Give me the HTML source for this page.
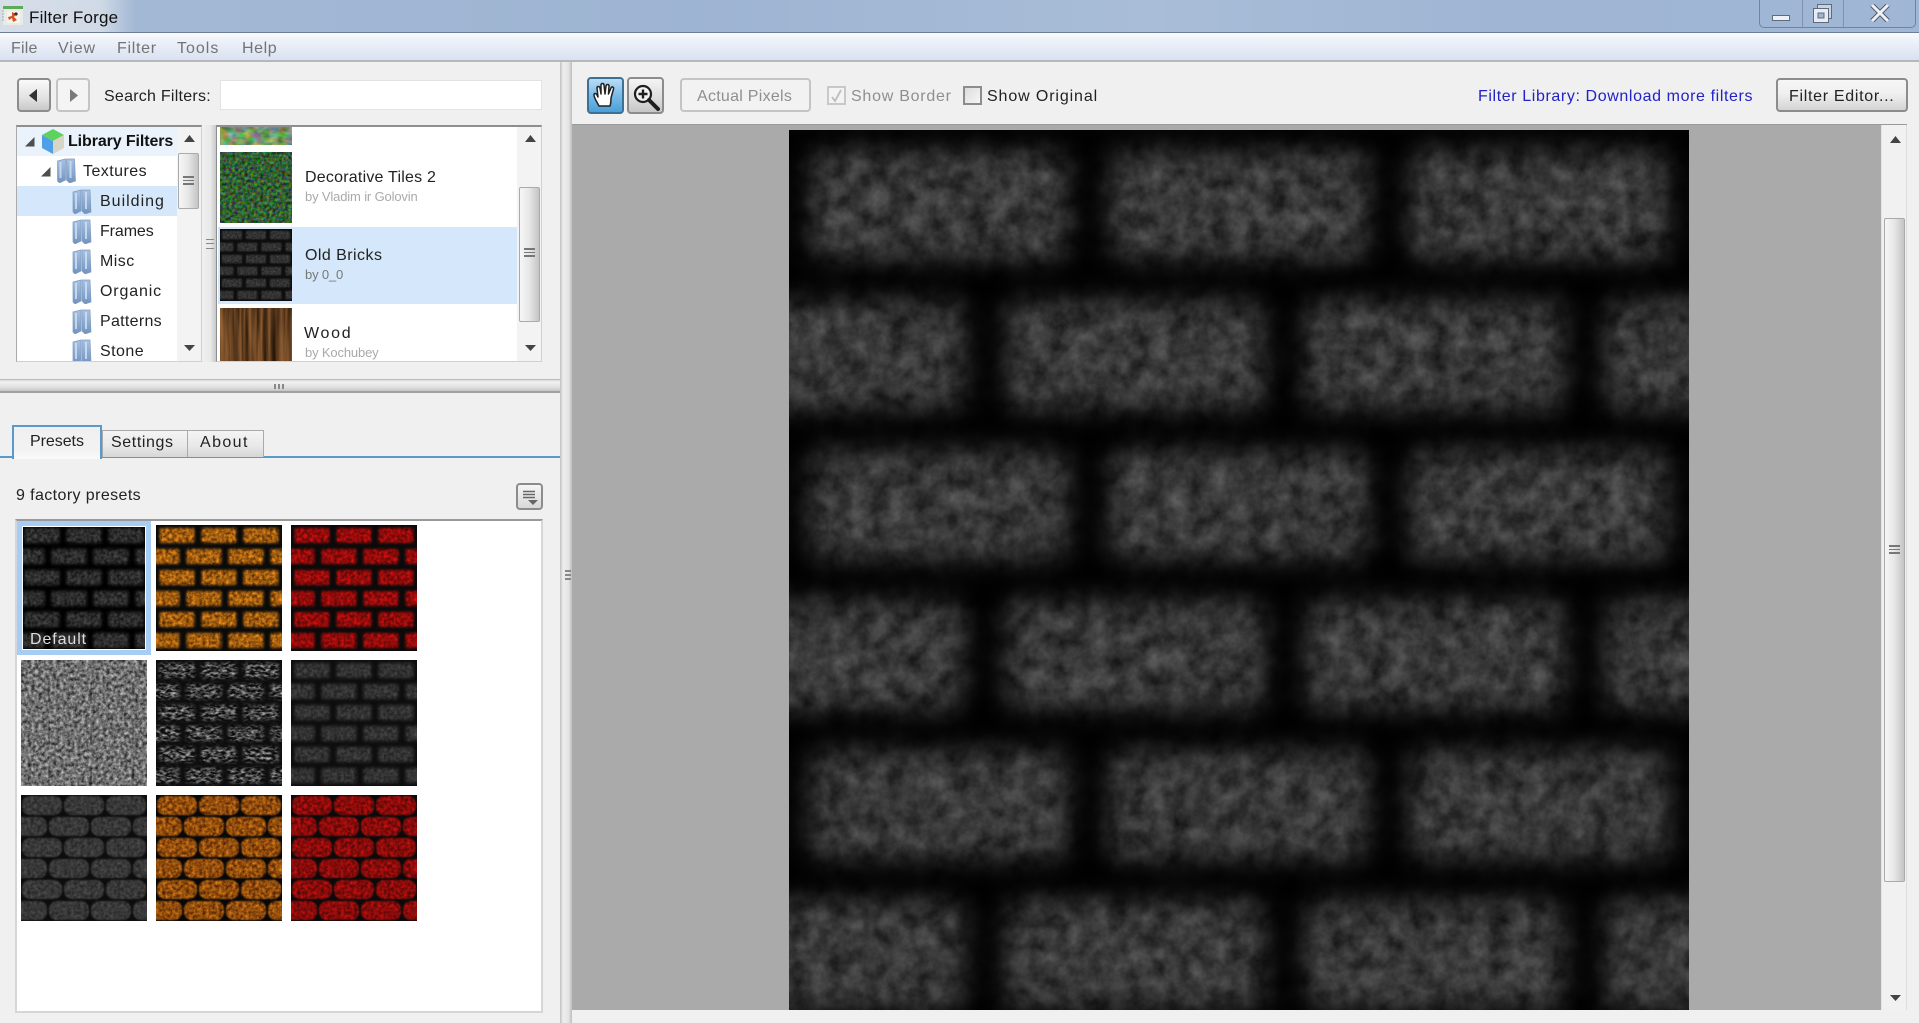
<!DOCTYPE html>
<html lang="en"><head><meta charset="utf-8"><title>Filter Forge</title>
<style>
html,body{margin:0;padding:0;width:1919px;height:1023px;overflow:hidden;background:#f0f0f0}
body{position:relative;font-family:"Liberation Sans",sans-serif;color:#222}
.a{position:absolute;box-sizing:border-box}
.t{position:absolute;white-space:nowrap;font-size:16px;line-height:18px;height:18px;margin-top:1px;letter-spacing:.45px;filter:blur(.25px)}
.s{font-size:13px;color:#aaa;letter-spacing:-.15px}
.thumb{background:linear-gradient(90deg,#f7f7f7,#e6e6e6 50%,#c4c4c4);border:1px solid #aaa;border-radius:2px}
.btn{border:2px solid #8c8c8c;border-radius:4px;background:linear-gradient(#f6f6f6,#f0f0f0 45%,#d4d4d4)}
svg{position:absolute;display:block}
</style></head><body>
<svg width="0" height="0" style="left:0;top:0">
<defs>
<pattern id="pm" width="900" height="300" patternUnits="userSpaceOnUse">
<rect width="900" height="300" fill="#000"/>
<g fill="#fff">
<rect x="20" y="20" width="260" height="110" rx="14"/><rect x="320" y="20" width="260" height="110" rx="14"/><rect x="620" y="20" width="260" height="110" rx="14"/>
<rect x="-84" y="170" width="260" height="110" rx="14"/><rect x="216" y="170" width="260" height="110" rx="14"/><rect x="516" y="170" width="260" height="110" rx="14"/><rect x="816" y="170" width="260" height="110" rx="14"/>
</g></pattern>
<pattern id="ps" width="126" height="42" patternUnits="userSpaceOnUse">
<rect width="126" height="42" fill="#000"/>
<g fill="#fff">
<rect x="3.500" y="3" width="35" height="15" rx="2"/><rect x="45.500" y="3" width="35" height="15" rx="2"/><rect x="87.500" y="3" width="35" height="15" rx="2"/>
<rect x="-11.500" y="24" width="35" height="15" rx="2"/><rect x="30.500" y="24" width="35" height="15" rx="2"/><rect x="72.500" y="24" width="35" height="15" rx="2"/><rect x="114.500" y="24" width="35" height="15" rx="2"/>
</g></pattern>
<pattern id="pr" width="126" height="42" patternUnits="userSpaceOnUse">
<rect width="126" height="42" fill="#000"/>
<g fill="#fff">
<rect x="1" y="1" width="40" height="19" rx="8"/><rect x="43" y="1" width="40" height="19" rx="8"/><rect x="85" y="1" width="40" height="19" rx="8"/>
<rect x="-14" y="22" width="40" height="19" rx="8"/><rect x="28" y="22" width="40" height="19" rx="8"/><rect x="70" y="22" width="40" height="19" rx="8"/><rect x="112" y="22" width="40" height="19" rx="8"/>
</g></pattern>
<pattern id="pl" width="126" height="126" patternUnits="userSpaceOnUse">
<rect width="126" height="126" fill="#fff"/>
<g stroke="#777" stroke-width="1" fill="none"><path d="M28 21V42M70 21V42M112 21V42M28 63V84M70 63V84M112 63V84M28 105V126M70 105V126M112 105V126"/></g>
</pattern>
<filter id="fm" x="0" y="0" width="1" height="1" color-interpolation-filters="sRGB">
<feGaussianBlur in="SourceGraphic" stdDeviation="13" result="m"/>
<feTurbulence type="fractalNoise" baseFrequency=".05" numOctaves="6" seed="4"/>
<feColorMatrix values=".34 0 0 0 .05 .34 0 0 0 .05 .34 0 0 0 .05 0 0 0 0 1" result="n"/>
<feComposite in="n" in2="m" operator="arithmetic" k1="1"/>
</filter>
<filter id="f1" x="0" y="0" width="1" height="1" color-interpolation-filters="sRGB"><feGaussianBlur in="SourceGraphic" stdDeviation="1.600" result="m"/><feTurbulence type="fractalNoise" baseFrequency=".3" numOctaves="3" seed="4"/><feColorMatrix values=".32 0 0 0 .02 .32 0 0 0 .02 .32 0 0 0 .02 0 0 0 0 1" result="n"/><feComposite in="n" in2="m" operator="arithmetic" k1="1"/></filter>
<filter id="f2" x="0" y="0" width="1" height="1" color-interpolation-filters="sRGB"><feGaussianBlur in="SourceGraphic" stdDeviation="1.400" result="m"/><feTurbulence type="fractalNoise" baseFrequency=".3" numOctaves="3" seed="4"/><feColorMatrix values="1 0 0 0 .1 .6 0 0 0 .03 .1 0 0 0 -.03 0 0 0 0 1" result="n"/><feComposite in="n" in2="m" operator="arithmetic" k1="1" k4=".04"/></filter>
<filter id="f3" x="0" y="0" width="1" height="1" color-interpolation-filters="sRGB"><feGaussianBlur in="SourceGraphic" stdDeviation="1.400" result="m"/><feTurbulence type="fractalNoise" baseFrequency=".3" numOctaves="3" seed="4"/><feColorMatrix values=".85 0 0 0 .12 .05 0 0 0 -.02 .04 0 0 0 -.02 0 0 0 0 1" result="n"/><feComposite in="n" in2="m" operator="arithmetic" k1="1" k4=".04"/></filter>
<filter id="f4" x="0" y="0" width="1" height="1" color-interpolation-filters="sRGB"><feGaussianBlur in="SourceGraphic" stdDeviation=".4" result="m"/><feTurbulence type="fractalNoise" baseFrequency=".28" numOctaves="4" seed="4"/><feColorMatrix values=".9 0 0 0 -.01 .9 0 0 0 -.01 .9 0 0 0 -.01 0 0 0 0 1" result="n"/><feComposite in="n" in2="m" operator="arithmetic" k1="1"/></filter>
<filter id="f5" x="0" y="0" width="1" height="1" color-interpolation-filters="sRGB"><feGaussianBlur in="SourceGraphic" stdDeviation="1.800" result="m"/><feTurbulence type="fractalNoise" baseFrequency=".2 .4" numOctaves="3" seed="7"/><feColorMatrix values="1.400 0 0 0 -.5 1.400 0 0 0 -.5 1.400 0 0 0 -.5 0 0 0 0 1" result="n"/><feComposite in="n" in2="m" operator="arithmetic" k1="1" k4=".05"/></filter>
<filter id="f6" x="0" y="0" width="1" height="1" color-interpolation-filters="sRGB"><feGaussianBlur in="SourceGraphic" stdDeviation="1.600" result="m"/><feTurbulence type="fractalNoise" baseFrequency=".3" numOctaves="3" seed="4"/><feColorMatrix values=".24 0 0 0 .03 .24 0 0 0 .03 .24 0 0 0 .03 0 0 0 0 1" result="n"/><feComposite in="n" in2="m" operator="arithmetic" k1="1" k4=".05"/></filter>
<filter id="f7" x="0" y="0" width="1" height="1" color-interpolation-filters="sRGB"><feGaussianBlur in="SourceGraphic" stdDeviation=".7" result="m"/><feTurbulence type="fractalNoise" baseFrequency=".3" numOctaves="3" seed="4"/><feColorMatrix values=".24 0 0 0 .05 .24 0 0 0 .05 .24 0 0 0 .05 0 0 0 0 1" result="n"/><feComposite in="n" in2="m" operator="arithmetic" k1="1" k4=".05"/></filter>
<filter id="f8" x="0" y="0" width="1" height="1" color-interpolation-filters="sRGB"><feGaussianBlur in="SourceGraphic" stdDeviation=".7" result="m"/><feTurbulence type="fractalNoise" baseFrequency=".3" numOctaves="3" seed="4"/><feColorMatrix values=".85 0 0 0 .12 .55 0 0 0 0 .1 0 0 0 -.03 0 0 0 0 1" result="n"/><feComposite in="n" in2="m" operator="arithmetic" k1="1" k4=".03"/></filter>
<filter id="f9" x="0" y="0" width="1" height="1" color-interpolation-filters="sRGB"><feGaussianBlur in="SourceGraphic" stdDeviation=".7" result="m"/><feTurbulence type="fractalNoise" baseFrequency=".3" numOctaves="3" seed="4"/><feColorMatrix values=".8 0 0 0 .1 .05 0 0 0 -.02 .04 0 0 0 -.02 0 0 0 0 1" result="n"/><feComposite in="n" in2="m" operator="arithmetic" k1="1" k4=".04"/></filter>
<filter id="fg" x="0" y="0" width="1" height="1" color-interpolation-filters="sRGB"><feTurbulence type="fractalNoise" baseFrequency=".32" numOctaves="2" seed="9"/><feColorMatrix values=".7 0 0 0 -.15 0 .8 0 0 -.03 0 0 .8 0 -.2 0 0 0 0 1"/></filter>
<filter id="fh" x="0" y="0" width="1" height="1" color-interpolation-filters="sRGB"><feTurbulence type="fractalNoise" baseFrequency=".12 .18" numOctaves="2" seed="3"/><feColorMatrix values=".9 0 0 0 0 0 .6 0 0 .3 0 0 .8 0 0 0 0 0 0 1"/></filter>
<filter id="fw" x="0" y="0" width="1" height="1" color-interpolation-filters="sRGB"><feTurbulence type="fractalNoise" baseFrequency=".25 .01" numOctaves="3" seed="5"/><feColorMatrix values=".6 0 0 0 .06 .42 0 0 0 .02 .25 0 0 0 -.01 0 0 0 0 1"/></filter>
<linearGradient id="fo" x1="0" y1="0" x2="0" y2="1"><stop offset="0" stop-color="#a9c2e2"/><stop offset="1" stop-color="#6f93bf"/></linearGradient>
<symbol id="folder" viewBox="0 0 20 25"><path d="M1 3 9 1V22L3 25 1 23Z" fill="url(#fo)" stroke="#7f9cc0" stroke-width=".7"/><path d="M10 1H18L19 23 13 25 10 22Z" fill="url(#fo)" stroke="#7f9cc0" stroke-width=".7"/><path d="M4 4V20M14 3V20" stroke="#d3e2f4" stroke-width="2" opacity=".8"/></symbol>
</defs>
</svg>

<!-- title bar -->
<div class="a" style="left:0;top:0;width:1919px;height:33px;background:linear-gradient(90deg,#d6dee8 0,#d0dae6 100px,#a3b8d5 135px,#9db4d2 700px,#a9bdd8 1150px,#9fb5d3 1500px,#9fb6d4 1919px);border-bottom:1px solid #6c7f96"></div>
<svg style="left:2px;top:6px" width="22" height="20" viewBox="0 0 22 20"><rect x="1" y="0" width="20" height="19" fill="#e9ece6"/><rect x="1" y="0" width="20" height="3" fill="#5cab5a"/><path d="M0 5h2M0 8h2M0 11h2M0 14h2" stroke="#aaa"/><rect x="5" y="5" width="13" height="12" fill="#f6f3ec"/><path d="M10 6l4 2-2 3 3 3-4 2-1-4-3 2-1-3 4-1z" fill="#d9501e"/><circle cx="14" cy="8" r="1.600" fill="#2e2e2e"/></svg>
<div class="t" style="left:29px;top:8px;font-size:17px;letter-spacing:.2px;color:#111">Filter Forge</div>
<div class="a" style="left:1759px;top:0;width:157px;height:28px;border:1px solid #6f84a0;border-top:0;border-radius:0 0 5px 5px"></div>
<div class="a" style="left:1802px;top:0;width:1px;height:27px;background:#7f93ad"></div>
<div class="a" style="left:1843px;top:0;width:1px;height:27px;background:#7f93ad"></div>
<div class="a" style="left:1772px;top:15px;width:18px;height:6px;background:#eef1f5;border:1px solid #5e6b7c"></div>
<svg style="left:1812px;top:4px" width="22" height="19" viewBox="0 0 22 19"><rect x="5.500" y=".5" width="14" height="14" fill="#c8d4e4" stroke="#5e6b7c"/><rect x="1.500" y="4.500" width="15" height="14" fill="#e8ecf2" stroke="#5e6b7c"/><rect x="6" y="9" width="6" height="5" fill="#9fb5d3" stroke="#5e6b7c"/></svg>
<svg style="left:1870px;top:4px" width="20" height="18" viewBox="0 0 20 18"><path d="M2 1 L18 17 M18 1 L2 17" stroke="#4f5c6d" stroke-width="5"/><path d="M2 1 L18 17 M18 1 L2 17" stroke="#eef1f5" stroke-width="3"/></svg>

<!-- menu bar -->
<div class="a" style="left:0;top:33px;width:1919px;height:29px;background:linear-gradient(#fafbfe,#eef2f9 25%,#d9e2f2);border-bottom:2px solid #b5b8bd"></div>
<div class="t" style="left:11px;top:39px;color:#737373;letter-spacing:.2px">File</div>
<div class="t" style="left:58px;top:39px;color:#737373;letter-spacing:.9px">View</div>
<div class="t" style="left:117px;top:39px;color:#737373;letter-spacing:.7px">Filter</div>
<div class="t" style="left:177px;top:39px;color:#737373;letter-spacing:1px">Tools</div>
<div class="t" style="left:242px;top:39px;color:#737373;letter-spacing:.6px">Help</div>

<!-- left toolbar -->
<div class="a btn" style="left:17px;top:78px;width:34px;height:34px;background:linear-gradient(#fafafa,#e2e2e2 60%,#c9c9c9)"></div>
<svg style="left:29px;top:89px" width="10" height="13" viewBox="0 0 10 13"><path d="M8 0V13L0 6.500Z" fill="#333"/></svg>
<div class="a" style="left:56px;top:78px;width:34px;height:34px;border:2px solid #c4c4c4;border-radius:4px;background:#f4f4f4"></div>
<svg style="left:69px;top:89px" width="10" height="13" viewBox="0 0 10 13"><path d="M1 0V13L9 6.500Z" fill="#7a7a7a"/></svg>
<div class="t" style="left:104px;top:87px;letter-spacing:.25px">Search Filters:</div>
<div class="a" style="left:220px;top:80px;width:322px;height:30px;background:#fff;border:1px solid #e2e2e2"></div>

<!-- tree panel -->
<div class="a" style="left:16px;top:125px;width:186px;height:237px;background:#fff;border:1px solid #d0d0d0;border-top:2px solid #8e8e8e;border-left-color:#aaa;overflow:hidden"></div>
<div class="a" style="left:17px;top:127px;width:160px;height:29px;background:#eaf3fc"></div>
<div class="a" style="left:17px;top:186px;width:160px;height:30px;background:#d5e8fb"></div>
<svg style="left:25px;top:137px" width="10" height="10" viewBox="0 0 10 10"><path d="M9.500 0V9.500H0Z" fill="#4e4e4e"/></svg>
<svg style="left:41px;top:167px" width="10" height="10" viewBox="0 0 10 10"><path d="M9.500 0V9.500H0Z" fill="#4e4e4e"/></svg>
<svg style="left:41px;top:129px" width="24" height="25" viewBox="0 0 24 25"><path d="M12 0 23 6 12 12 1 6Z" fill="#5fd25d"/><path d="M1 6 12 12V25L1 19Z" fill="#4f9fe8"/><path d="M23 6 12 12V25L23 19Z" fill="#d8d4c6"/></svg>
<div class="t" style="left:68px;top:132px;font-weight:bold;letter-spacing:-.1px;color:#111">Library Filters</div>
<svg style="left:56px;top:158px" width="21" height="25"><use href="#folder"/></svg>
<div class="t" style="left:83px;top:162px">Textures</div>
<svg style="left:72px;top:189px" width="20" height="25"><use href="#folder"/></svg><div class="t" style="left:100px;top:192px;letter-spacing:1px">Building</div>
<svg style="left:72px;top:219px" width="20" height="25"><use href="#folder"/></svg><div class="t" style="left:100px;top:222px;letter-spacing:-.1px">Frames</div>
<svg style="left:72px;top:249px" width="20" height="25"><use href="#folder"/></svg><div class="t" style="left:100px;top:252px">Misc</div>
<svg style="left:72px;top:279px" width="20" height="25"><use href="#folder"/></svg><div class="t" style="left:100px;top:282px;letter-spacing:.85px">Organic</div>
<svg style="left:72px;top:309px" width="20" height="25"><use href="#folder"/></svg><div class="t" style="left:100px;top:312px;letter-spacing:.3px">Patterns</div>
<svg style="left:72px;top:339px" width="20" height="22" viewBox="0 0 20 22" preserveAspectRatio="xMidYMin slice"><use href="#folder" width="20" height="25"/></svg><div class="t" style="left:100px;top:342px">Stone</div>
<div class="a" style="left:177px;top:127px;width:24px;height:234px;background:#f3f3f3"></div>
<div class="a thumb" style="left:178px;top:153px;width:21px;height:56px"></div>
<div class="a" style="left:183px;top:176px;width:11px;height:9px;border-top:2px solid #777;border-bottom:2px solid #777"></div><div class="a" style="left:183px;top:180px;width:11px;height:1px;background:#777"></div>
<svg style="left:184px;top:135px" width="11" height="7" viewBox="0 0 11 7"><path d="M5.500 0 11 7H0Z" fill="#444"/></svg>
<svg style="left:184px;top:345px" width="11" height="6" viewBox="0 0 11 6"><path d="M5.500 6 11 0H0Z" fill="#444"/></svg>
<!-- small splitter -->
<div class="a" style="left:202px;top:125px;width:14px;height:237px;background:linear-gradient(90deg,#f0f0f0,#e9e9e9 60%,#c8c8c8)"></div>
<div class="a" style="left:206px;top:239px;width:8px;height:10px;border-top:1px solid #888;border-bottom:1px solid #888"></div><div class="a" style="left:206px;top:243px;width:8px;height:1px;background:#888"></div>

<!-- list panel -->
<div class="a" style="left:216px;top:125px;width:326px;height:237px;background:#fff;border:1px solid #d0d0d0;border-top:2px solid #8e8e8e;border-left-color:#8e8e8e"></div>
<div class="a" style="left:218px;top:227px;width:299px;height:77px;background:#d5e8fb"></div>
<svg style="left:220px;top:127px" width="72" height="18"><rect width="72" height="18" fill="#55b060" filter="url(#fh)"/></svg>
<svg style="left:220px;top:152px" width="72" height="71"><rect width="72" height="71" fill="#000" filter="url(#fg)"/></svg>
<svg style="left:220px;top:229px" width="72" height="72" viewBox="0 0 72 72"><g transform="scale(.5714)"><rect x="-10" y="-10" width="146" height="146" fill="url(#ps)" filter="url(#f6)"/></g></svg>
<svg style="left:220px;top:308px" width="72" height="53"><rect width="72" height="53" fill="#000" filter="url(#fw)"/></svg>
<div class="t" style="left:305px;top:168px;letter-spacing:.22px;color:#222">Decorative Tiles 2</div>
<div class="t s" style="left:305px;top:187px">by Vladim ir Golovin</div>
<div class="t" style="left:305px;top:246px;letter-spacing:.45px;color:#222">Old Bricks</div>
<div class="t s" style="left:305px;top:265px;color:#777">by 0_0</div>
<div class="t" style="left:304px;top:324px;letter-spacing:1.700px;color:#222">Wood</div>
<div class="t s" style="left:305px;top:343px">by Kochubey</div>
<div class="a" style="left:517px;top:127px;width:24px;height:234px;background:#f3f3f3"></div>
<div class="a thumb" style="left:519px;top:187px;width:21px;height:135px"></div>
<div class="a" style="left:524px;top:248px;width:11px;height:9px;border-top:2px solid #777;border-bottom:2px solid #777"></div><div class="a" style="left:524px;top:252px;width:11px;height:1px;background:#777"></div>
<svg style="left:525px;top:135px" width="11" height="7" viewBox="0 0 11 7"><path d="M5.500 0 11 7H0Z" fill="#444"/></svg>
<svg style="left:525px;top:345px" width="11" height="6" viewBox="0 0 11 6"><path d="M5.500 6 11 0H0Z" fill="#444"/></svg>

<!-- horizontal splitter -->
<div class="a" style="left:0;top:379px;width:560px;height:14px;background:linear-gradient(#dadada,#f0f0f0 20%,#dedede 70%,#c4c4c4);border-bottom:2px solid #a0a0a0;border-top:1px solid #bbb"></div>
<div class="a" style="left:274px;top:384px;width:2px;height:5px;background:#888"></div><div class="a" style="left:278px;top:384px;width:2px;height:5px;background:#888"></div><div class="a" style="left:282px;top:384px;width:2px;height:5px;background:#888"></div>

<!-- tabs -->
<div class="a" style="left:0;top:456px;width:560px;height:2px;background:#5a9ac8"></div>
<div class="a" style="left:102px;top:430px;width:86px;height:27px;border:1px solid #aaa;border-bottom:0;background:linear-gradient(#f4f4f4,#e8e8e8 60%,#d6d6d6)"></div>
<div class="a" style="left:187px;top:430px;width:77px;height:27px;border:1px solid #aaa;border-bottom:0;background:linear-gradient(#f4f4f4,#e8e8e8 60%,#d6d6d6)"></div>
<div class="a" style="left:12px;top:425px;width:90px;height:34px;border:2px solid #5a9ac8;border-bottom:0;background:linear-gradient(#f0f0f0,#f2f2f2 70%,#fafafa)"></div>
<div class="t" style="left:30px;top:432px;color:#222;letter-spacing:-.05px">Presets</div>
<div class="t" style="left:111px;top:433px;letter-spacing:.6px;color:#222">Settings</div>
<div class="t" style="left:200px;top:433px;color:#222;letter-spacing:1.400px">About</div>

<div class="t" style="left:16px;top:486px;letter-spacing:.4px;color:#222">9 factory presets</div>
<div class="a" style="left:516px;top:483px;width:27px;height:27px;border:2px solid #8c8c8c;border-radius:4px;background:linear-gradient(#f6f6f6,#d8d8d8)"></div>
<svg style="left:522px;top:490px" width="16" height="15" viewBox="0 0 16 15"><path d="M1 1.500H13M1 4.500H13M1 7.500H13" stroke="#666" stroke-width="1.500"/><path d="M6 10h10l-5 5z" fill="#666"/></svg>

<!-- presets box -->
<div class="a" style="left:15px;top:519px;width:528px;height:494px;background:#fff;border:2px solid #d4d6da;border-top:2px solid #999"></div>
<div class="a" style="left:17px;top:521px;width:134px;height:134px;background:#a8cdf5"></div>
<div class="a" style="left:22px;top:526px;width:124px;height:124px;background:#fff"></div>
<svg style="left:23px;top:527px" width="122" height="122" viewBox="2 2 122 122"><rect x="-10" y="-10" width="146" height="146" fill="url(#ps)" filter="url(#f1)"/></svg>
<svg style="left:156px;top:525px" width="126" height="126"><rect x="-10" y="-10" width="146" height="146" fill="url(#ps)" filter="url(#f2)"/></svg>
<svg style="left:291px;top:525px" width="126" height="126"><rect x="-10" y="-10" width="146" height="146" fill="url(#ps)" filter="url(#f3)"/></svg>
<svg style="left:21px;top:660px" width="126" height="126"><rect x="-10" y="-10" width="146" height="146" fill="url(#pl)" filter="url(#f4)"/></svg>
<svg style="left:156px;top:660px" width="126" height="126"><rect x="-10" y="-10" width="146" height="146" fill="url(#ps)" filter="url(#f5)"/></svg>
<svg style="left:291px;top:660px" width="126" height="126"><rect x="-10" y="-10" width="146" height="146" fill="url(#ps)" filter="url(#f6)"/></svg>
<svg style="left:21px;top:795px" width="126" height="126"><rect x="-10" y="-10" width="146" height="146" fill="url(#pr)" filter="url(#f7)"/></svg>
<svg style="left:156px;top:795px" width="126" height="126"><rect x="-10" y="-10" width="146" height="146" fill="url(#pr)" filter="url(#f8)"/></svg>
<svg style="left:291px;top:795px" width="126" height="126"><rect x="-10" y="-10" width="146" height="146" fill="url(#pr)" filter="url(#f9)"/></svg>
<div class="t" style="left:30px;top:630px;color:#ddd;letter-spacing:.9px">Default</div>

<!-- vertical splitter -->
<div class="a" style="left:560px;top:62px;width:12px;height:961px;background:linear-gradient(90deg,#c0c0c0,#ededed 25%,#e6e6e6 70%,#bdbdbd)"></div>
<div class="a" style="left:565px;top:570px;width:6px;height:2px;background:#888"></div><div class="a" style="left:565px;top:574px;width:6px;height:2px;background:#888"></div><div class="a" style="left:565px;top:578px;width:6px;height:2px;background:#888"></div>

<!-- right toolbar -->
<div class="a" style="left:587px;top:77px;width:37px;height:37px;border:2px solid #3e7096;border-radius:4px;background:linear-gradient(#b9dcf5,#79bce8 50%,#4a9fd8)"></div>
<svg style="left:593px;top:82px" width="24" height="26" viewBox="0 0 24 26"><path d="M6 24C4 20 1 16 1 13 1 11 3 11 4 13L5 15 4 6C4 4 6.500 4 7 6L8 12 8 3C8 1 11 1 11 3L12 12 13 4C13.500 2 16 2 16 4L15.500 12 18 6C18.500 4 21 5 20.500 7L18 16C18 19 18 21 17 24Z" fill="#fff" stroke="#222" stroke-width="1.500" stroke-linejoin="round"/></svg>
<div class="a" style="left:627px;top:77px;width:37px;height:37px;border:2px solid #8c8c8c;border-radius:4px;background:linear-gradient(#f4f4f4,#dcdcdc 60%,#c6c6c6)"></div>
<svg style="left:633px;top:84px" width="28" height="27" viewBox="0 0 28 27"><circle cx="10" cy="10" r="8" fill="#f2f2f2" stroke="#1e1e1e" stroke-width="2.200"/><path d="M10 5.500V14.500M5.500 10H14.500" stroke="#1e1e1e" stroke-width="2.400"/><path d="M16 16 25 25" stroke="#1e1e1e" stroke-width="4" stroke-linecap="round"/></svg>
<div class="a" style="left:680px;top:78px;width:131px;height:34px;border:2px solid #c4c4c4;border-radius:4px;background:#f2f2f2"></div>
<div class="t" style="left:697px;top:87px;color:#8f8f8f;letter-spacing:.27px">Actual Pixels</div>
<div class="a" style="left:827px;top:86px;width:19px;height:19px;border:2px solid #c8c8c8;background:#f4f4f4"></div>
<svg style="left:831px;top:89px" width="12" height="14" viewBox="0 0 12 14"><path d="M1 8 4 12 10 1" fill="none" stroke="#c0c0c0" stroke-width="2"/></svg>
<div class="t" style="left:851px;top:87px;color:#8f8f8f;letter-spacing:.75px">Show Border</div>
<div class="a" style="left:963px;top:86px;width:19px;height:19px;border:2px solid #8c8c8c;background:linear-gradient(135deg,#dcdcdc,#f6f6f6)"></div>
<div class="t" style="left:987px;top:87px;letter-spacing:.88px;color:#222">Show Original</div>
<div class="t" style="left:1478px;top:87px;color:#2222c8;letter-spacing:.61px">Filter Library: Download more filters</div>
<div class="a btn" style="left:1776px;top:78px;width:132px;height:34px"></div>
<div class="t" style="left:1789px;top:87px;letter-spacing:.7px;color:#222">Filter Editor...</div>

<!-- view area -->
<div class="a" style="left:572px;top:124px;width:1335px;height:886px;background:#aaa;border-top:1px solid #999"></div>
<svg style="left:789px;top:130px" width="900" height="880"><rect x="-40" y="-40" width="980" height="960" fill="url(#pm)" filter="url(#fm)"/></svg>
<div class="a" style="left:1881px;top:125px;width:26px;height:885px;background:#f1f1f1;border-left:1px solid #e4e4e4;border-right:1px solid #dcdcdc"></div>
<div class="a thumb" style="left:1884px;top:218px;width:21px;height:664px"></div>
<div class="a" style="left:1889px;top:545px;width:11px;height:9px;border-top:2px solid #777;border-bottom:2px solid #777"></div><div class="a" style="left:1889px;top:549px;width:11px;height:1px;background:#777"></div>
<svg style="left:1890px;top:136px" width="11" height="7" viewBox="0 0 11 7"><path d="M5.500 0 11 7H0Z" fill="#444"/></svg>
<svg style="left:1890px;top:995px" width="11" height="6" viewBox="0 0 11 6"><path d="M5.500 6 11 0H0Z" fill="#444"/></svg>
</body></html>
